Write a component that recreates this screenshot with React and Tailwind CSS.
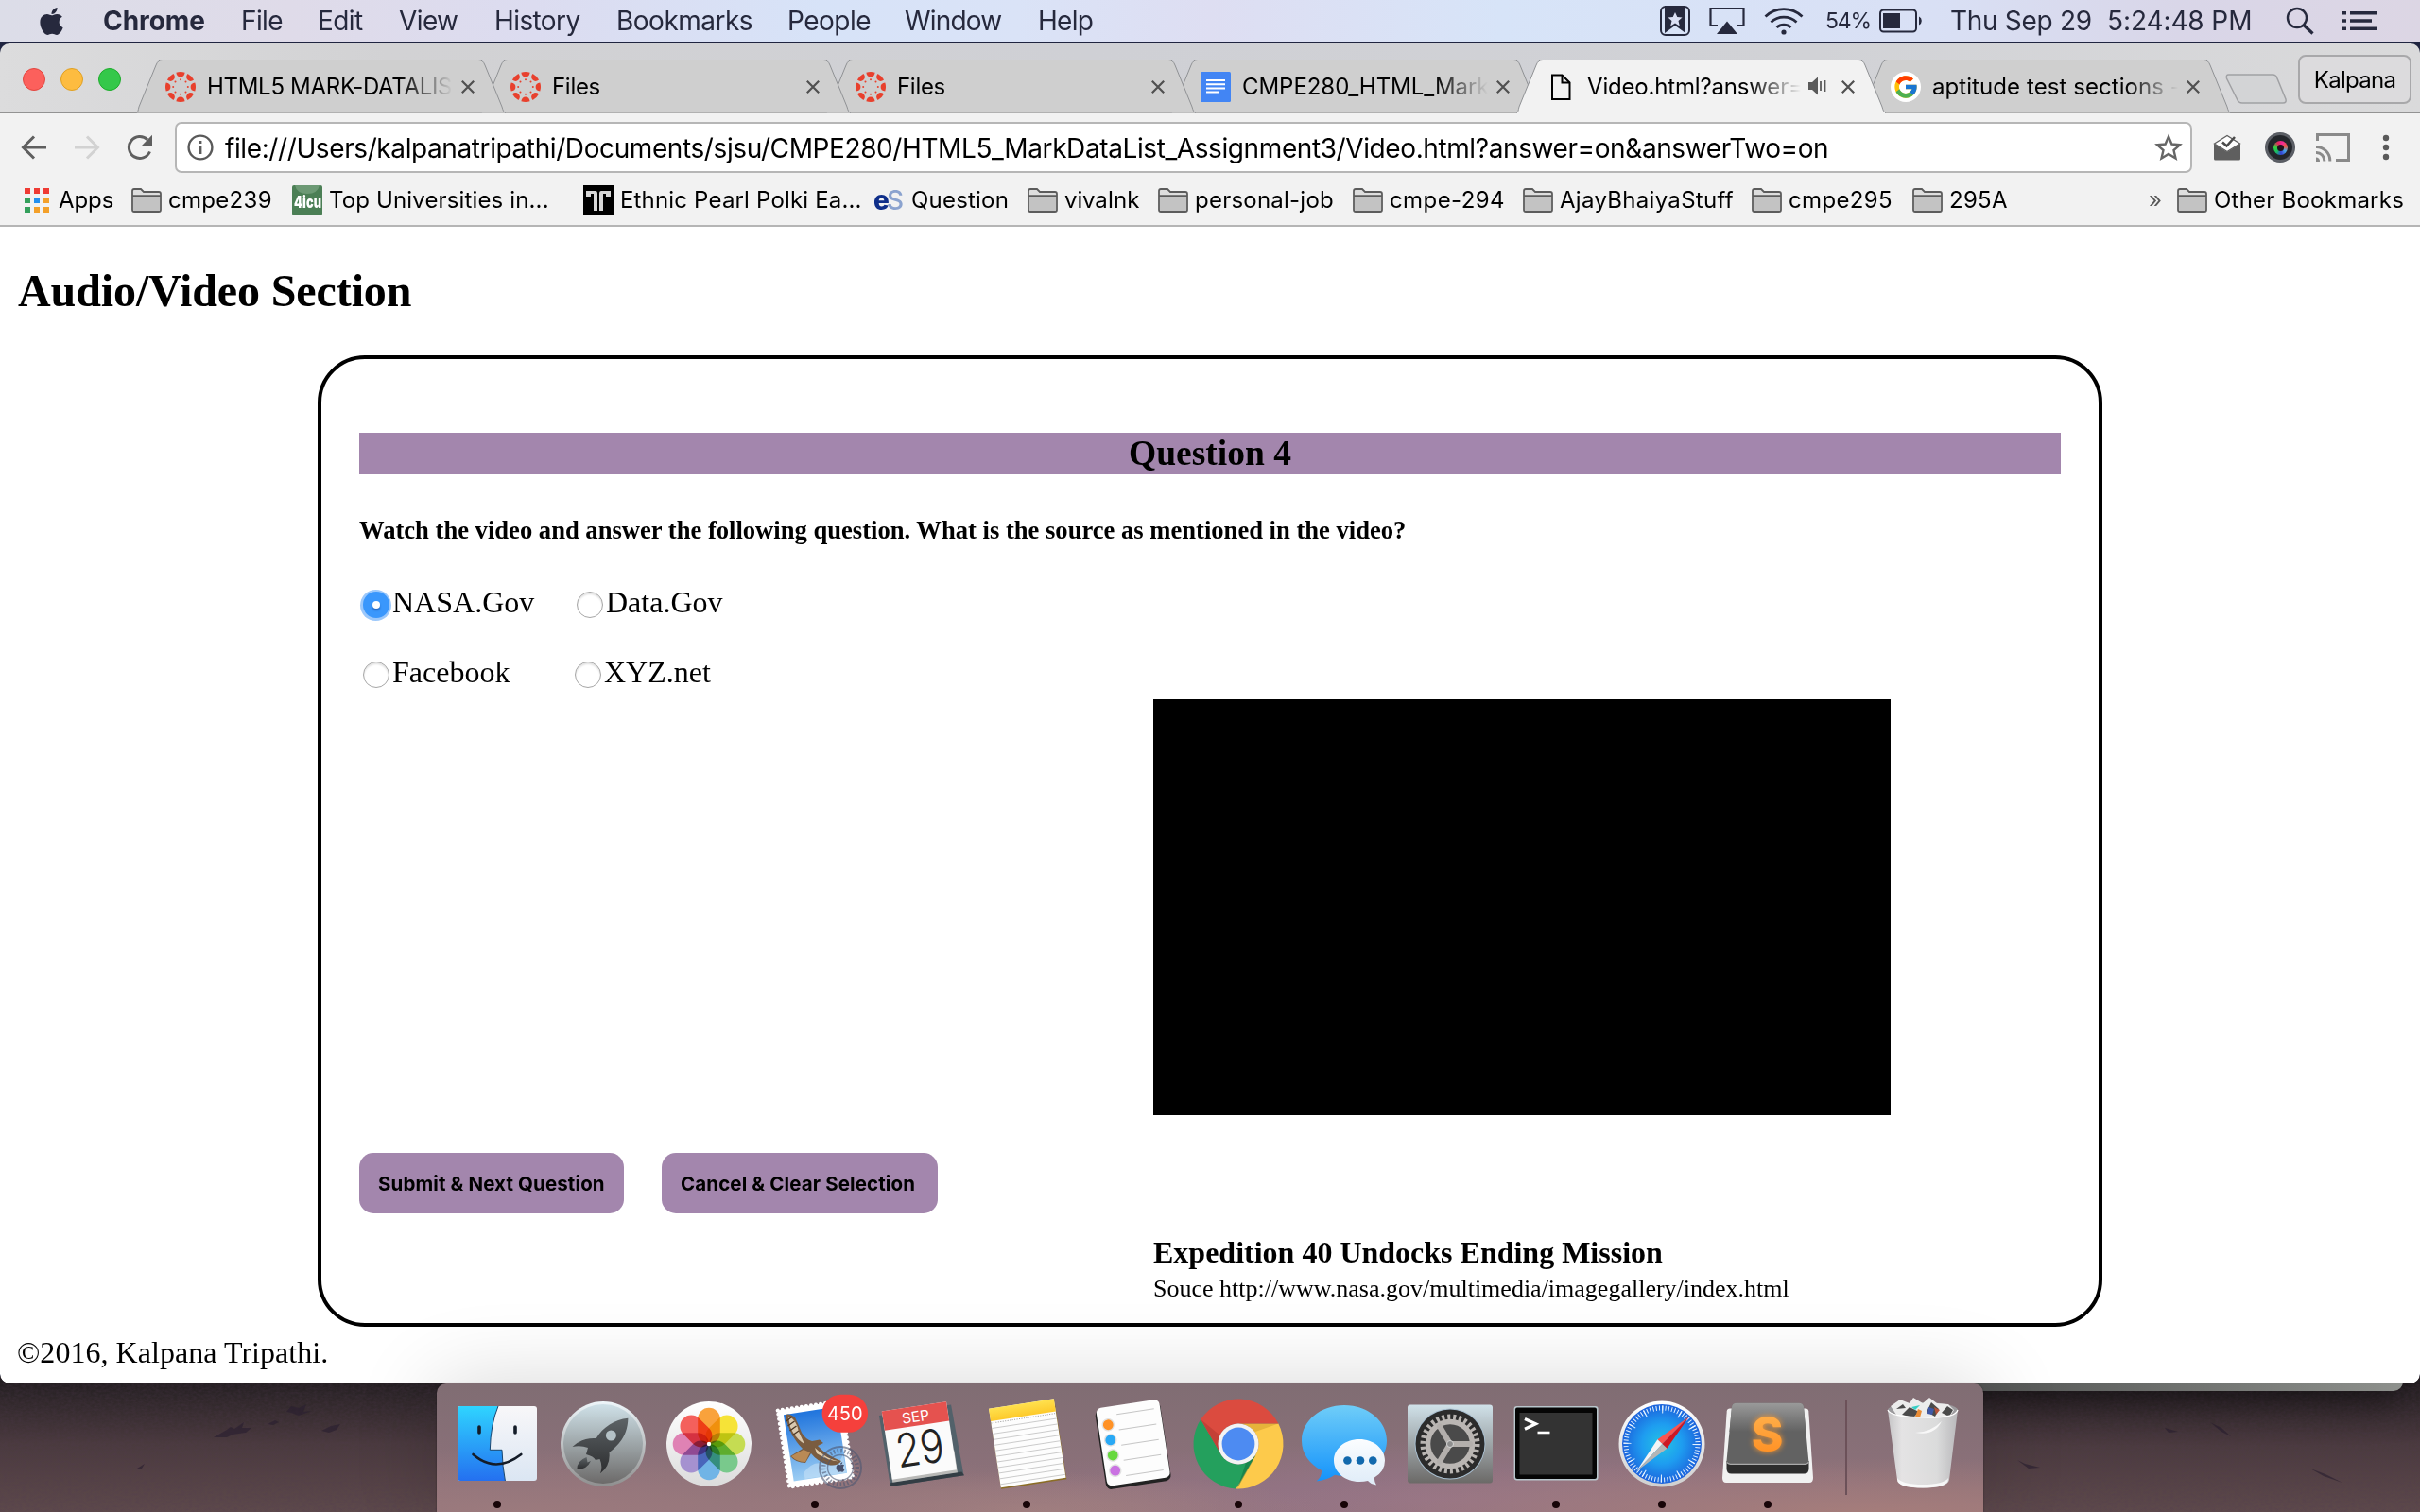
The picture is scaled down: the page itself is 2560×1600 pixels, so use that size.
import React from "react";
import { FaApple } from "react-icons/fa";
import { FcGoogle } from "react-icons/fc";

const EIGHT = [0, 45, 90, 135, 180, 225, 270, 315];

/* ---------- menu bar ---------- */

const MENUS = [
  { label: "Chrome", cls: "w-[146px] font-bold tracking-[-0.05px]" },
  { label: "File", cls: "w-[81px] tracking-[-0.6px]" },
  { label: "Edit", cls: "w-[86px] tracking-[-0.6px]" },
  { label: "View", cls: "w-[101px] tracking-[-0.6px]" },
  { label: "History", cls: "w-[129px] tracking-[-0.6px]" },
  { label: "Bookmarks", cls: "w-[181px] tracking-[-0.5px]" },
  { label: "People", cls: "w-[124px] tracking-[-0.5px]" },
  { label: "Window", cls: "w-[141px] tracking-[-0.8px]" },
  { label: "Help", cls: "w-[80px] tracking-[-0.7px]" },
];

function MenuBar() {
  return (
    <div className="flex h-11 shrink-0 items-center bg-[linear-gradient(90deg,#dcdde8_0%,#dfdbe9_12%,#dcdcf0_22%,#d7e3f8_34%,#dae3f7_42%,#dedef2_50%,#d7e4f8_62%,#d9e0f5_80%,#d9d6e8_90%,#dcd6e4_100%)] text-[28px] leading-[44px] text-[#26293d]">
      <FaApple className="ml-[39px] mr-[39px] h-[33px] w-[31px]" />
      {MENUS.map((m) => (
        <span key={m.label} className={"shrink-0 " + m.cls}>{m.label}</span>
      ))}
      <div className="ml-auto mr-[46px] flex items-center">
        <svg viewBox="0 0 32 32" className="h-8 w-8">
          <rect x="1" y="1" width="30" height="30" rx="5" fill="none" stroke="currentColor" strokeWidth="2" />
          <path d="M5 0h22v29l-11-8-11 8z" fill="currentColor" />
          <path d="M16 7l2.3 5 5.2.5-4 3.6 1.3 5.3-4.8-2.8-4.8 2.8 1.3-5.3-4-3.6 5.2-.5z" fill="#dbe0f4" />
        </svg>
        <svg viewBox="0 0 38 30" className="ml-[20px] h-[30px] w-[38px]">
          <path d="M9 20H1.500V2h35v18H29" fill="none" stroke="currentColor" strokeWidth="2.200" />
          <path d="M19 15.500L30 29H8z" fill="currentColor" />
        </svg>
        <svg viewBox="0 0 42 30" className="ml-5 mr-px h-[30px] w-[42px]" fill="none" stroke="currentColor" strokeWidth="2.700">
          <path d="M1.500 10.500a28 28 0 0 1 39 0" />
          <path d="M7.500 16.500a19.500 19.500 0 0 1 27 0" />
          <path d="M13.500 22a11 11 0 0 1 15 0" />
          <circle cx="21" cy="27" r="2.600" fill="currentColor" stroke="none" />
        </svg>
        <span className="ml-[22px] w-[57px] text-[23px] tracking-[-1.2px]">54%</span>
        <svg viewBox="0 0 46 26" className="h-[26px] w-[46px]">
          <rect x="1" y="1.500" width="38" height="23" rx="3.500" fill="none" stroke="currentColor" strokeWidth="2" />
          <rect x="4" y="5" width="18" height="16" fill="currentColor" />
          <path d="M42 8.500a5 5 0 0 1 0 9z" fill="currentColor" />
        </svg>
        <span className="ml-[29px] w-[166px] tracking-[-0.3px]">Thu Sep 29</span>
        <span className="w-[189px] tracking-[-0.1px]">5:24:48 PM</span>
        <svg viewBox="0 0 30 30" className="h-[30px] w-[30px]" fill="none" stroke="currentColor">
          <circle cx="12" cy="12" r="10" strokeWidth="2.400" />
          <path d="M19 19.500l9.500 9" strokeWidth="3.200" />
        </svg>
        <svg viewBox="0 0 36 22" className="ml-[30px] h-[22px] w-9" fill="currentColor">
          <path d="M0 1h4v3.500H0zM8 1h28v3.500H8zM0 9.300h4v3.500H0zM8 9.300h23v3.500H8zM0 17.600h4v3.500H0zM8 17.600h28v3.500H8z" />
        </svg>
      </div>
    </div>
  );
}

/* ---------- tab strip ---------- */

function CanvasIcon() {
  return (
    <svg viewBox="0 0 32 32" className="h-8 w-8 shrink-0 translate-y-px" fill="#e8402d">
      {EIGHT.map((a) => (
        <g key={a} transform={`rotate(${a} 16 16)`}>
          <path d="M11.400 .7a16 16 0 0 1 9.200 0Q20 5.400 16 5.400T11.400 .7z" />
          <circle cx="16" cy="8.200" r="1" />
        </g>
      ))}
    </svg>
  );
}

function DocsIcon() {
  return (
    <svg viewBox="0 0 32 32" className="h-8 w-8 shrink-0 translate-y-px">
      <rect width="32" height="32" rx="1.500" fill="#4285f4" />
      <path d="M6 9h20M6 13.200h20M6 17.400h20M6 21.400h13" stroke="#fff" strokeWidth="2" />
    </svg>
  );
}

function PageIcon() {
  return (
    <svg viewBox="0 0 32 32" className="h-8 w-8 shrink-0 translate-y-px" fill="none" stroke="#000" strokeWidth="2">
      <path d="M7 3.500h10.500l8 8V29H7z" />
      <path d="M17.500 3.500v8h8" />
    </svg>
  );
}

function GoogleIcon() {
  return (
    <span className="flex h-8 w-8 shrink-0 translate-y-px items-center justify-center rounded-full bg-white">
      <FcGoogle className="h-7 w-7" />
    </span>
  );
}

const TABS = [
  { icon: CanvasIcon, title: "HTML5 MARK-DATALIST", z: "z-[6]", track: "tracking-[-0.3px]" },
  { icon: CanvasIcon, title: "Files", z: "z-[5]", track: "tracking-[-0.3px]" },
  { icon: CanvasIcon, title: "Files", z: "z-[4]", track: "tracking-[-0.3px]" },
  { icon: DocsIcon, title: "CMPE280_HTML_MarkDataList", z: "z-[3]", track: "tracking-[-0.05px]" },
  { icon: PageIcon, title: "Video.html?answer=on", z: "z-[7]", track: "tracking-[-0.18px]", active: true },
  { icon: GoogleIcon, title: "aptitude test sections - Google", z: "z-[2]", track: "tracking-[0.07px]" },
];

function Tab({ tab }) {
  const Icon = tab.icon;
  return (
    <div className={"relative -mr-[26px] flex w-[391px] shrink-0 items-center pl-[31px] pr-[34px] " + tab.z}>
      <svg viewBox="0 0 391 57" className="absolute left-0 top-0 -z-10 h-[57px] w-[391px]">
        <path
          d="M0 56.500C2 56 2 54 3 50L21 6Q23 .5 28 .5H362Q367 .5 369 6L387 50C388 54 389 56 391 56.500"
          fill={tab.active ? "#f2f2f2" : "#cfcfcf"}
          stroke="#8f9194"
        />
        {tab.active && <path d="M1 56.500H390" stroke="#f2f2f2" strokeWidth="1.500" />}
      </svg>
      <Icon />
      <span
        className={
          "ml-3 mr-2 flex-1 translate-y-px overflow-hidden whitespace-nowrap text-2xl text-black [mask-image:linear-gradient(to_right,#000_calc(100%-56px),transparent)] " +
          tab.track
        }
      >
        {tab.title}
      </span>
      {tab.active && (
        <svg viewBox="0 0 20 20" className="mr-3.5 h-5 w-5 shrink-0" fill="#5a5a5a">
          <path d="M0 6h4l6-5.500v19L4 14H0z" />
          <path d="M13 5v10M17.500 4v12" stroke="#5a5a5a" strokeWidth="1.800" />
        </svg>
      )}
      <svg viewBox="0 0 14 14" className="h-3.5 w-3.5 shrink-0 translate-x-px translate-y-px">
        <path d="M.8.8l12.400 12.400M13.200.8L.8 13.200" stroke="#505050" strokeWidth="2.200" />
      </svg>
    </div>
  );
}

function TabStrip() {
  return (
    <div className="flex h-[74px] items-stretch border-b border-[#939393] bg-[linear-gradient(90deg,#dcdcdd,#d2d2d4_16%,#cfd0d5_45%,#d1d2d6_75%,#dadadb)] pr-[9px]">
      <div className="flex gap-4 pl-6 pt-[26px]">
        <span className="h-6 w-6 rounded-full border border-[#e2463f] bg-[#fc605c]" />
        <span className="h-6 w-6 rounded-full border border-[#dfa023] bg-[#fdbc40]" />
        <span className="h-6 w-6 rounded-full border border-[#1dad2b] bg-[#34c84a]" />
      </div>
      <div className="isolate ml-4 mt-[17px] flex">
        {TABS.map((t, i) => (
          <Tab key={i} tab={t} />
        ))}
      </div>
      <svg viewBox="0 0 66 32" className="ml-5 mt-8 h-8 w-[66px] shrink-0">
        <path d="M3.500 1H50q4 0 5 4l9 22q1 4-3 4H18q-4 0-5.500-4L1.500 5q-1-4 2-4z" fill="#d3d4d6" stroke="#a0a1a4" strokeWidth="1.500" />
      </svg>
      <div className="ml-auto mt-3 flex h-[52px] w-[120px] items-center justify-center rounded-lg border-2 border-[#a8a8aa] bg-[#dcdbdd] pt-0.5 text-2xl tracking-[-0.7px] text-black">
        Kalpana
      </div>
    </div>
  );
}

/* ---------- toolbar ---------- */

function Toolbar() {
  return (
    <div className="flex h-[72px] items-center bg-[#f2f2f2] pl-[22px] text-[#5f5f5f]">
      <svg viewBox="0 0 28 26" className="h-[26px] w-7" fill="none" stroke="#5f5f5f" strokeWidth="3">
        <path d="M27 13H3M14 1.500L2.500 13 14 24.500" />
      </svg>
      <svg viewBox="0 0 28 26" className="ml-7 h-[26px] w-7" fill="none" stroke="#d2d2d2" strokeWidth="3">
        <path d="M1 13h24M14 1.500L25.500 13 14 24.500" />
      </svg>
      <svg viewBox="0 0 28 28" className="ml-7 h-7 w-7">
        <path d="M24.500 18.500A11.500 11.500 0 1 1 22 5.800" fill="none" stroke="#5f5f5f" strokeWidth="3" />
        <path d="M27 .8V12H16z" fill="#5f5f5f" />
      </svg>
      <div className="ml-[23px] flex h-[54px] w-[2134px] items-center rounded-[7px] border-2 border-[#b6b6b6] bg-white pl-3 pr-2">
        <svg viewBox="0 0 28 28" className="-ml-px mr-px h-7 w-7 shrink-0">
          <circle cx="14" cy="14" r="12.400" fill="none" stroke="#5a5a5a" strokeWidth="2.400" />
          <path d="M14 12v9M14 7v3" stroke="#5a5a5a" strokeWidth="2.800" />
        </svg>
        <span className="ml-[11px] flex-1 translate-y-px whitespace-nowrap text-[28px] tracking-[-0.4px] text-black">
          file:///Users/kalpanatripathi/Documents/sjsu/CMPE280/HTML5_MarkDataList_Assignment3/Video.html?answer=on&answerTwo=on
        </span>
        <svg viewBox="0 0 30 30" className="h-[30px] w-[30px] shrink-0" fill="none" stroke="#666" strokeWidth="2.400">
          <path d="M15 3.500l3.400 8 8.600.8-6.500 5.700 2 8.500-7.500-4.500-7.500 4.500 2-8.500L3 12.300l8.600-.8z" />
        </svg>
      </div>
      <svg viewBox="0 0 30 28" className="ml-[22px] h-7 w-[30px]">
        <path d="M1 10v16a1.500 1.500 0 0 0 1.500 1.500h25A1.500 1.500 0 0 0 29 26V10l-14 9z" fill="#5f5f5f" />
        <path d="M1.500 10L15 1.500 28.500 10 15 18.500z" fill="#fff" stroke="#5f5f5f" strokeWidth="1.300" />
        <path d="M10 8.500l4.500 4L23 3" fill="none" stroke="#4c4c4c" strokeWidth="2.600" />
      </svg>
      <span className="ml-[25px] flex h-8 w-8 items-center justify-center rounded-full bg-[radial-gradient(circle,#23262b_55%,#5d6067_60%,#43474e_100%)]">
        <span className="flex h-[15px] w-[15px] items-center justify-center rounded-full bg-[conic-gradient(from_20deg,#f3289a,#f05a3c,#48a8e8,#3540d8,#18c060,#38d040,#e02858,#f3289a)]">
          <span className="h-[7px] w-[7px] rounded-full bg-[#20141c]" />
        </span>
      </span>
      <svg viewBox="0 0 36 30" className="ml-[22px] h-[30px] w-9" fill="none" stroke="#8a8a8a" strokeWidth="3">
        <path d="M1.500 8V1.500h33v27H21" />
        <path d="M0 14.500A14.500 14.500 0 0 1 14.800 29.500M0 20.500a8.500 8.500 0 0 1 8.800 9" />
        <path d="M0 25.500a4 4 0 0 1 4 4.500H0z" fill="#8a8a8a" stroke="none" />
      </svg>
      <svg viewBox="0 0 8 28" className="ml-[34px] h-7 w-2" fill="#5a5a5a">
        <circle cx="4" cy="4" r="3.200" />
        <circle cx="4" cy="14" r="3.200" />
        <circle cx="4" cy="24" r="3.200" />
      </svg>
    </div>
  );
}

/* ---------- bookmarks ---------- */

function FolderIcon() {
  return (
    <svg viewBox="0 0 32 26" className="h-[26px] w-8 shrink-0">
      <path d="M1 23V3q0-2 2-2h7l3 3h16q2 0 2 2v17q0 2-2 2H3q-2 0-2-2z" fill="#dedede" stroke="#5c5c5c" strokeWidth="1.800" />
      <path d="M2 9h28v14q0 1-1 1H3q-1 0-1-1z" fill="#c3c3c3" />
      <path d="M1 8.200h30" stroke="#5c5c5c" strokeWidth="1.800" />
    </svg>
  );
}

const APP_COLORS = ["#ef3b34", "#ef3b34", "#ef3b34", "#34a05c", "#2490f0", "#f3a02a", "#34a05c", "#f3a02a", "#f3a02a"];

function AppsIcon() {
  return (
    <svg viewBox="0 0 26 26" className="mr-[3px] h-[26px] w-[26px] shrink-0">
      {APP_COLORS.map((c, i) => (
        <rect key={i} x={(i % 3) * 10} y={Math.floor(i / 3) * 10} width="6" height="6" fill={c} />
      ))}
    </svg>
  );
}

function IcuIcon() {
  return (
    <svg viewBox="0 0 32 32" className="h-8 w-8 shrink-0">
      <rect width="32" height="32" rx="2" fill="#4b7f55" />
      <path d="M3 0h26q-2 9-13 9T3 0z" fill="#6c9974" />
      <text x="2" y="24" fill="#fff" textLength="29" lengthAdjust="spacingAndGlyphs" className="font-[Inter] text-[17px] font-black">4icu</text>
    </svg>
  );
}

function PillarIcon() {
  return (
    <svg viewBox="0 0 32 32" className="h-8 w-8 shrink-0">
      <rect width="32" height="32" fill="#000" />
      <path d="M3 6h10q2 0 2 3v18h-4V9H8v3H3zM29 6H19q-2 0-2 3v18h4V9h3v3h5z" fill="#d8d8d8" />
    </svg>
  );
}

function EsIcon() {
  return (
    <svg viewBox="0 0 32 32" className="h-8 w-8 shrink-0">
      <text x="13" y="26" fill="#8ba3cf" className="font-[Inter] text-[28px] font-medium">S</text>
      <text x="-1" y="26" fill="#0f2f8a" className="font-[Inter] text-[28px] font-extrabold">e</text>
    </svg>
  );
}

const BOOKMARKS = [
  { icon: AppsIcon, label: "Apps", cls: "w-[113px] tracking-[-0.1px]" },
  { icon: FolderIcon, label: "cmpe239", cls: "w-[170px] tracking-[0.3px]" },
  { icon: IcuIcon, label: "Top Universities in...", cls: "w-[308px] tracking-[0.14px]" },
  { icon: PillarIcon, label: "Ethnic Pearl Polki Ea...", cls: "w-[308px] tracking-[0.17px]" },
  { icon: EsIcon, label: "Question", cls: "w-[162px] tracking-[0.2px]" },
  { icon: FolderIcon, label: "vivaInk", cls: "w-[138px] tracking-[-0.1px]" },
  { icon: FolderIcon, label: "personal-job", cls: "w-[206px] tracking-[0.23px]" },
  { icon: FolderIcon, label: "cmpe-294", cls: "w-[180px] tracking-[0.4px]" },
  { icon: FolderIcon, label: "AjayBhaiyaStuff", cls: "w-[242px] tracking-[0.3px]" },
  { icon: FolderIcon, label: "cmpe295", cls: "w-[170px] tracking-[0.35px]" },
  { icon: FolderIcon, label: "295A", cls: "w-[250px] tracking-[0.3px]" },
];

function BookmarksBar() {
  return (
    <div className="flex h-12 items-center border-b-2 border-[#b5b5b5] bg-[#f2f2f2] pb-[7px] pl-[26px] text-2xl text-black">
      {BOOKMARKS.map(({ icon: Icon, label, cls }) => (
        <span key={label} className={"flex shrink-0 items-center gap-[7px] whitespace-nowrap " + cls}>
          <Icon />
          {label}
        </span>
      ))}
      <span className="w-[30px] text-[#5a5a5a]">»</span>
      <span className="flex items-center gap-[7px] whitespace-nowrap tracking-[0.23px]">
        <FolderIcon />
        Other Bookmarks
      </span>
    </div>
  );
}

/* ---------- quiz page ---------- */

function Radio({ checked }) {
  if (checked) {
    return (
      <span className="flex h-[33px] w-[33px] shrink-0 items-center justify-center rounded-full bg-[#9cc8fb]">
        <span className="flex h-7 w-7 items-center justify-center rounded-full bg-[#3a97fc]">
          <span className="h-2 w-2 rounded-full bg-white shadow-[0_2px_2px_rgba(20,60,140,0.5)]" />
        </span>
      </span>
    );
  }
  return (
    <span className="h-7 w-7 shrink-0 rounded-full border border-[#a6a6a6] bg-white shadow-[inset_0_2px_2px_rgba(0,0,0,0.12)]" />
  );
}

function QuizPage() {
  return (
    <div className="flex-1 rounded-b-[10px] bg-white font-['Liberation_Serif',serif] text-black">
      <h1 className="pl-[19px] pt-10 text-[48px] font-bold leading-[56px] tracking-[-0.1px]">Audio/Video Section</h1>
      <div className="mx-auto mt-10 h-[1028px] w-[1888px] rounded-[50px] border-4 border-black px-10 pt-[78px]">
        <h2 className="h-11 bg-[#a386ad] text-center text-[37.5px] font-bold leading-[44px]">Question 4</h2>
        <p className="mt-11 text-[26.6px] font-bold leading-[30px]">
          Watch the video and answer the following question. What is the source as mentioned in the video?
        </p>
        <div className="mt-[43px] flex h-9 items-center text-[32px] leading-9">
          <label className="flex w-[229px] items-center gap-px pl-px">
            <span className="flex translate-y-[3px]"><Radio checked /></span>
            NASA.Gov
          </label>
          <label className="flex items-center gap-[3px] pl-px">
            <span className="flex translate-y-[3px]"><Radio /></span>
            Data.Gov
          </label>
        </div>
        <div className="mt-[38px] flex h-9 items-center text-[32px] leading-9">
          <label className="flex w-[228px] items-center gap-[3px] pl-1">
            <span className="flex translate-y-[3px]"><Radio /></span>
            Facebook
          </label>
          <label className="flex items-center gap-[3px]">
            <span className="flex translate-y-[3px]"><Radio /></span>
            XYZ.net
          </label>
        </div>
        <div className="ml-[840px] mt-[11px] h-[440px] w-[780px] bg-black" />
        <div className="mt-10 flex gap-10 font-[Inter,sans-serif] text-[20.5px] font-bold tracking-[0.12px]">
          <button className="h-16 w-[280px] rounded-[15px] bg-[#a386ad] pl-5 pt-0.5 text-left">Submit &amp; Next Question</button>
          <button className="h-16 w-[292px] rounded-[15px] bg-[#a386ad] pl-5 pt-0.5 text-left">Cancel &amp; Clear Selection</button>
        </div>
        <div className="ml-[840px] mt-[23px]">
          <h3 className="text-[32px] font-bold leading-9">Expedition 40 Undocks Ending Mission</h3>
          <p className="mt-1.5 text-[26px] leading-[30px]">Souce http://www.nasa.gov/multimedia/imagegallery/index.html</p>
        </div>
      </div>
      <p className="mt-[9px] pl-[18px] text-[32px] leading-9 tracking-[0.04px]">©2016, Kalpana Tripathi.</p>
    </div>
  );
}

/* ---------- dock icons ---------- */

function Svg({ children }) {
  return <svg viewBox="0 0 96 96" className="h-24 w-24 overflow-visible">{children}</svg>;
}

function Grad({ id, from, to }) {
  return (
    <linearGradient id={id} x1="0" y1="0" x2="0" y2="1">
      <stop offset="0" stopColor={from} />
      <stop offset="1" stopColor={to} />
    </linearGradient>
  );
}

function Finder() {
  return (
    <Svg>
      <defs>
        <Grad id="fL" from="#2fd4ff" to="#2470f0" />
        <Grad id="fR" from="#f8f7f9" to="#dbe6f3" />
      </defs>
      <rect x="6" y="8" width="84" height="79" rx="3" fill="url(#fR)" />
      <path d="M49 8H9q-3 0-3 3v73q0 3 3 3h47.400Q53.500 72 53 54.300H40.300Q41 27 49 8z" fill="url(#fL)" />
      <path d="M49 8Q41 27 40.300 54.300H53Q53.500 72 56.400 87" fill="none" stroke="#17456f" strokeWidth="1" />
      <g fill="none" stroke="#141c28" strokeLinecap="round">
        <path d="M29 30v6M67 30v6" strokeWidth="3.600" />
        <path d="M22.500 59Q46 80 73.300 59" strokeWidth="2.600" />
      </g>
    </Svg>
  );
}

function Launchpad() {
  return (
    <Svg>
      <defs>
        <Grad id="lp" from="#cfe1e8" to="#6c6a69" />
        <Grad id="lr" from="#eef6fa" to="#8f8f8f" />
        <Grad id="lk" from="#5d6366" to="#2c2d2f" />
      </defs>
      <circle cx="48" cy="48" r="45" fill="url(#lr)" />
      <circle cx="48" cy="48" r="42" fill="url(#lp)" />
      <path d="M74.400 20.700C60 22 48 30 40.700 42Q26 41 15.500 51Q24 49 32 52L30 59Q38 61 40 65L44.500 64Q48 72 45 79.300Q56 71 54.500 57C66 48 74 38 74.400 20.700z" fill="url(#lk)" />
      <circle cx="56.400" cy="39" r="5.500" fill="#b4c1c6" />
      <path d="M30.500 62Q20 66 20.400 75Q31 75 35 66L31.500 67.500z" fill="url(#lk)" />
    </Svg>
  );
}

function Photos() {
  const c = ["#f9a23c", "#f6e337", "#c5dc52", "#79c98c", "#70b4e6", "#a591d0", "#df82b4", "#f4605c"];
  return (
    <Svg>
      <defs><Grad id="ph" from="#ffffff" to="#dcdcdc" /></defs>
      <circle cx="48" cy="48" r="45" fill="url(#ph)" />
      <g className="isolate">
        {c.map((f, i) => (
          <rect key={f} x="36.200" y="9.700" width="23.600" height="38.300" rx="11.800" fill={f} transform={`rotate(${i * 45} 48 48)`} className="mix-blend-multiply" />
        ))}
      </g>
      <circle cx="48" cy="48" r="2.200" fill="#fff" />
    </Svg>
  );
}

function Mail() {
  return (
    <Svg>
      <defs><Grad id="ml" from="#1f74dd" to="#9ccdf3" /></defs>
      <g transform="rotate(-8.700 48.500 48)">
        <rect x="14.500" y="7" width="68" height="82" fill="#fff" />
        <rect x="14.500" y="7" width="68" height="82" fill="none" stroke="#fff" strokeWidth="4" strokeLinecap="round" strokeDasharray="0.100 5" />
        <rect x="20" y="12.500" width="57" height="71" fill="url(#ml)" />
        <path d="M32 76q12-12 24-5t20-8v20H32z" fill="#cfe5f7" opacity=".5" />
      </g>
      <path d="M17 17Q21 15 27 20Q31 28 34 36Q38 43 45 45L53 43.500L57 47L51 50Q60 60 76 66Q72 72 62 70Q50 66 44 58L38 68Q28 68 22 61L35 53Q20 38 17 17z" fill="#7a5c40" />
      <path d="M20 19Q28 21 31 35L37 48Q27 42 22 30z" fill="#d9c9b0" />
      <path d="M18 24l6-5M19.500 29l7-5M21.500 34l7-5M24 39l7-5" stroke="#4c3826" strokeWidth="1.400" />
      <path d="M48 52Q60 64 74 66.500Q62 66 50 58z" fill="#e3cfae" />
      <path d="M36 54L23 61Q29 67 38 67L43 57z" fill="#b98a55" />
      <g fill="none" stroke="#4d5672" strokeOpacity=".6">
        <circle cx="75" cy="73" r="22" strokeWidth="2" />
        <circle cx="75" cy="73" r="13.500" strokeWidth="1.400" />
        <circle cx="75" cy="73" r="17.800" strokeWidth="4.500" strokeDasharray="1.600 2.200" />
      </g>
      <FaApple x="69" y="66.500" size="12" color="#47506c" />
      <rect x="55.600" y="-4.300" width="48.500" height="40" rx="20" fill="#f5403c" />
      <text x="79.800" y="23" textAnchor="middle" fill="#fff" className="font-[Inter] text-[20px]">450</text>
    </Svg>
  );
}

function Calendar() {
  return (
    <Svg>
      <g transform="rotate(-8.700 46 45)">
        <path d="M8.500 12h77l2 76H9z" fill="#52616a" />
        <path d="M10 84h76l2 4H9z" fill="#333d44" />
        <rect x="12" y="60" width="69.500" height="24" fill="#b9b9b7" />
        <rect x="12" y="8" width="69" height="73" fill="#fbfbfb" />
        <rect x="12" y="8" width="69" height="20.500" fill="#e5524f" />
        <text x="46.500" y="24.500" textAnchor="middle" fill="#fff" className="font-[Inter] text-[15.500px]">SEP</text>
        <text x="46" y="70" textAnchor="middle" fill="#222" textLength="51" lengthAdjust="spacingAndGlyphs" className="font-[Inter] text-[49px] font-light">29</text>
      </g>
    </Svg>
  );
}

function Notes() {
  return (
    <Svg>
      <defs><Grad id="nt" from="#ffe14f" to="#fdc92a" /></defs>
      <g transform="rotate(-8.700 48.800 47)">
        <rect x="14" y="6" width="70" height="85" fill="#8b6d25" />
        <rect x="14" y="5" width="69.500" height="84.500" fill="#fdfdfd" />
        <rect x="14" y="5" width="69.500" height="13.500" fill="url(#nt)" />
        <path d="M14 20.500h69.500" stroke="#999" strokeWidth="1" strokeDasharray="1 1.500" />
        {[26, 32, 38, 44, 50, 56, 62, 68, 74, 80, 86].map((y) => (
          <path key={y} d={`M14 ${y}h69.500`} stroke="#c9c9c9" strokeWidth=".9" />
        ))}
      </g>
    </Svg>
  );
}

function Reminders() {
  const rows = [["#ff9226", 24], ["#29a9f5", 40.300], ["#67d83e", 56.600], ["#ca72e2", 73]];
  return (
    <Svg>
      <g transform="rotate(-8.700 48.500 47)">
        <rect x="13.500" y="7" width="69.500" height="85" rx="6" fill="#222" />
        <rect x="15" y="5" width="67.500" height="83.500" rx="5.500" fill="#fdfdfd" />
        {rows.map(([c, y]) => (
          <g key={c}>
            <circle cx="25.500" cy={y} r="6.800" fill="#e2e2e2" />
            <circle cx="25.500" cy={y} r="5.400" fill={c} />
            <path d={`M36 ${y + 7}h40`} stroke="#c6c6c6" strokeWidth="1" />
          </g>
        ))}
        <path d="M36 14.500h40" stroke="#c6c6c6" strokeWidth="1" />
      </g>
    </Svg>
  );
}

function Chrome() {
  const d = "M90.350 26.500A47.500 47.500 0 0 0 8.200 22.070L29.400 58.750A21.500 21.500 0 0 1 48 26.500z";
  return (
    <Svg>
      <path d={d} fill="#fdca4b" transform="rotate(120 48 48)" />
      <path d={d} fill="#24a05d" transform="rotate(240 48 48)" />
      <path d={d} fill="#db4b3f" />
      <path d="M8.200 22L29.400 58.750 30 40z" fill="#9a2f28" opacity=".35" />
      <path d="M90.350 26.500H52L66 35z" fill="#b98a1c" opacity=".35" />
      <path d="M47 95L66.500 60 56 68z" fill="#0d6b3a" opacity=".5" />
      <circle cx="48" cy="48" r="21.500" fill="#f3f3f3" />
      <circle cx="48" cy="48" r="17.400" fill="#4d8bf2" />
    </Svg>
  );
}

function Messages() {
  return (
    <Svg>
      <defs>
        <Grad id="ms" from="#6fcdf8" to="#1593fb" />
        <Grad id="mw" from="#fbfdff" to="#dfecf8" />
      </defs>
      <path d="M48 7C23 7 3 23.500 3 44.500 3 58 11 69 24 76Q24.500 83 18.500 87.500Q31 86 38 80.800Q43 82 48 82C73 82 93 65.500 93 44.500S73 7 48 7z" fill="url(#ms)" />
      <path d="M64 43c-15 0-27 10-27 22.500S49 88 64 88q5 0 9-1 3 3.500 9 4.500-2.500-4-2-8Q91 77 91 65.500C91 53 79 43 64 43z" fill="url(#mw)" />
      <g fill="#1269ad"><circle cx="51.400" cy="65.500" r="4.300" /><circle cx="65" cy="65.500" r="4.300" /><circle cx="78.300" cy="65.500" r="4.300" /></g>
    </Svg>
  );
}

function Settings() {
  return (
    <Svg>
      <defs>
        <Grad id="st" from="#d0e1e9" to="#6b6967" />
      </defs>
      <rect x="3" y="6.500" width="90" height="83" rx="3" fill="url(#st)" />
      <circle cx="48" cy="48" r="37.500" fill="#a9bfd0" />
      <circle cx="48" cy="48" r="36.500" fill="#2b2b2b" />
      <circle cx="48" cy="48" r="28.500" fill="none" stroke="#b9b5b2" strokeWidth="6" strokeDasharray="3 2.970" />
      <circle cx="48" cy="48" r="23.500" fill="#4a4a4a" stroke="#bab6b3" strokeWidth="5.500" />
      <path d="M48 48H69M48 48L37 29.500M48 48L37 66.500" fill="none" stroke="#b3afac" strokeWidth="6" strokeLinecap="round" />
      <circle cx="48" cy="48" r="3.500" fill="#8e8e8e" stroke="#d5d5d5" />
    </Svg>
  );
}

function Terminal() {
  return (
    <Svg>
      <rect x="3.600" y="8" width="89" height="78.500" rx="3" fill="#b9c6cc" />
      <rect x="5" y="9.500" width="86" height="75.500" rx="2" fill="#050505" />
      <rect x="9.500" y="15" width="77" height="65.500" fill="#333" />
      <path d="M15 21.500l11.500 5.300L15 32.200" fill="none" stroke="#fff" strokeWidth="3.200" />
      <path d="M28.500 36h13" stroke="#fff" strokeWidth="2.600" />
    </Svg>
  );
}

function Safari() {
  return (
    <Svg>
      <defs>
        <radialGradient id="sf"><stop offset="0" stopColor="#23c4e4" /><stop offset=".5" stopColor="#1e9df0" /><stop offset="1" stopColor="#1c62dc" /></radialGradient>
        <Grad id="sr" from="#ffffff" to="#cfcfcf" />
      </defs>
      <circle cx="48" cy="48" r="45.500" fill="url(#sr)" />
      <circle cx="48" cy="48" r="42" fill="url(#sf)" />
      <circle cx="48" cy="48" r="38" fill="none" stroke="#e6f4ff" strokeWidth="5" strokeDasharray="1 2.316" />
      <circle cx="48" cy="48" r="36.500" fill="none" stroke="#e6f4ff" strokeWidth="8" strokeDasharray="1.100 18.010" />
      <path d="M76.700 19.300L43.400 43.300 48.400 48z" fill="#fb5450" />
      <path d="M76.700 19.300L53.400 52.700 48.400 48z" fill="#cf1722" />
      <path d="M21.200 76.700L43.400 43.300 48.400 48z" fill="#f4f4f4" />
      <path d="M21.200 76.700L53.400 52.700 48.400 48z" fill="#b5b5b5" />
    </Svg>
  );
}

function Sublime() {
  return (
    <Svg>
      <defs>
        <Grad id="sk" from="#9a9a9a" to="#626262" />
        <Grad id="so" from="#ffb653" to="#ff8a1c" />
      </defs>
      <path d="M8 10.500h80q3 0 3.300 3L96 84q0 5-4 5H4q-4 0-4-5L4.700 13.500q.3-3 3.300-3z" fill="#f1f1f1" />
      <path d="M4.500 66h87v8q0 5.500-5 5.500h-77q-5 0-5-5.500z" fill="#2d2d2d" />
      <path d="M15 4.700h66q4.500 0 5 4L91.300 66q0 3.500-4 3.500H8.500q-4 0-4-3.500L10 8.700q.5-4 5-4z" fill="#626262" />
      <path d="M15 4.700h66q4.500 0 5 4L88.400 35H7.500L10 8.700q.5-4 5-4z" fill="url(#sk)" />
      <path d="M5 67.500q1 1.800 3.500 1.800h79q3 0 3.800-2" fill="none" stroke="#aaa" strokeWidth="1.200" />
      <text x="47.500" y="55.500" textAnchor="middle" fill="url(#so)" className="font-[Inter] text-[51px] font-extrabold drop-shadow-[0_0_3px_#ff9a2e]">S</text>
    </Svg>
  );
}

function Trash() {
  return (
    <Svg>
      <defs>
        <linearGradient id="tr"><stop offset="0" stopColor="#c9c9cb" /><stop offset=".2" stopColor="#e9e9ea" /><stop offset=".7" stopColor="#dfe1e1" /><stop offset="1" stopColor="#bcbcbf" /></linearGradient>
      </defs>
      <ellipse cx="48" cy="12" rx="37" ry="8" fill="#9b9a9d" />
      <path d="M14 8L24 1l10 4 4-6 10 6 7-6 8 6 12 1 6 6-5 8H22z" fill="#ececec" />
      <path d="M20 11l7-5 3 4zM26 17l8-8 10 5-6 6zM52 14l5-10 8 7-4 8zM68 15l6-7 6 4-4 7z" fill="#4a4a4a" />
      <path d="M36 9l9-2-5 5z" fill="#35cfc4" /><path d="M43 11l4 2-2 7-5-1z" fill="#e98c35" /><path d="M54 9l6 2-2 6-5-1z" fill="#3f59a8" /><path d="M60 9l6 3-4 5z" fill="#b5533a" />
      <path d="M11 12Q13 19 48 20T85 12L76 86Q74 94.500 48 94.500T21 86z" fill="url(#tr)" fillOpacity=".95" />
      <path d="M11 12Q13 19 48 20T85 12" fill="none" stroke="#fff" strokeWidth="1.200" />
      <path d="M40 36q20 4 28-12-12 12-28 12z" fill="#fff" opacity=".8" />
      <path d="M21 84Q26 91 48 91t27-7l-.5 4Q70 94.500 48 94.500T21.500 88z" fill="#fff" opacity=".8" />
    </Svg>
  );
}

const DOCK = [
  { Icon: Finder, open: true },
  { Icon: Launchpad },
  { Icon: Photos },
  { Icon: Mail, open: true },
  { Icon: Calendar },
  { Icon: Notes, open: true },
  { Icon: Reminders },
  { Icon: Chrome, open: true },
  { Icon: Messages, open: true },
  { Icon: Settings },
  { Icon: Terminal, open: true },
  { Icon: Safari, open: true },
  { Icon: Sublime, open: true },
];

function DockItem({ Icon, open }) {
  return (
    <div className="flex w-28 shrink-0 flex-col items-center gap-3 pt-4">
      <Icon />
      {open && <span className="h-2 w-2 rounded-full bg-[#180508]" />}
    </div>
  );
}

function Dock() {
  return (
    <div className="relative mx-auto flex h-[136px] w-[1636px] rounded-t-[10px] bg-[radial-gradient(ellipse_at_5%_100%,#9b7a7d_0%,transparent_35%),radial-gradient(ellipse_at_38%_100%,#a28080_0%,transparent_22%),radial-gradient(ellipse_at_92%_100%,#a57d7b_0%,transparent_30%),radial-gradient(ellipse_at_65%_90%,#957488_0%,transparent_35%),linear-gradient(180deg,#806d73,#90727c)] pl-2 shadow-[0_0_90px_rgba(0,0,0,0.16),0_0_2px_rgba(0,0,0,0.4)]">
      {DOCK.map((d, i) => (
        <DockItem key={i} {...d} />
      ))}
      <span className="ml-[26px] mr-6 mt-[18px] h-[100px] w-0.5 shrink-0 bg-[#6c5159]" />
      <DockItem Icon={Trash} />
    </div>
  );
}

/* ---------- desktop ---------- */

function Ground() {
  return (
    <svg viewBox="0 0 2560 144" className="absolute bottom-0 left-0 h-36 w-full">
      <defs>
        <linearGradient id="gd" x1="0" y1="0" x2="0" y2="1">
          <stop offset="0" stopColor="#1d191c" />
          <stop offset=".12" stopColor="#2b2427" />
          <stop offset=".5" stopColor="#4a3a3e" />
          <stop offset="1" stopColor="#5d494b" />
        </linearGradient>
        <filter id="grain" x="0" y="0" width="100%" height="100%">
          <feTurbulence type="fractalNoise" baseFrequency="0.25 0.4" numOctaves="2" seed="4" />
          <feColorMatrix values="0 0 0 0 0.08  0 0 0 0 0.04  0 0 0 0 0.08  0.500 0 0 0 -0.160" />
        </filter>
      </defs>
      <rect width="2560" height="144" fill="url(#gd)" />
      <rect width="2560" height="144" filter="url(#grain)" />
      <g fill="#2a1f30" opacity=".65">
        <path d="M226 65l14-8 4-3 4 2 10-7-2 6 10 0-6 5-14 2-6 3zM303 38l5-6 8 2 8-4-3 8 9-1-14 5-8-3zM283 51l8-4 4 2-6 3zM340 58l10-5 10-2-4 6-8 3zM145 98l8-5-3 5zM2134 89l8 4 16 4-12 1zM2290 55l14 4-10 1zM2338 49l12 6 10 9-10-5zM2444 98l16 6 18 9-20-7z" />
      </g>
    </svg>
  );
}

export default function App() {
  return (
    <div className="relative flex h-[1600px] w-[2560px] flex-col overflow-hidden bg-[#1f2440] font-[Inter,sans-serif]">
      <Ground />
      <div className="absolute right-[18px] top-[1400px] h-[72px] w-[1500px] rounded-b-[10px] bg-[linear-gradient(90deg,#525453_70%,#8e918d)] shadow-[0_8px_40px_rgba(0,0,0,0.5)]" />
      <MenuBar />
      <div className="relative mt-0.5 flex h-[1418px] shrink-0 flex-col overflow-hidden rounded-[10px]">
        <TabStrip />
        <Toolbar />
        <BookmarksBar />
        <QuizPage />
      </div>
      <Dock />
    </div>
  );
}
